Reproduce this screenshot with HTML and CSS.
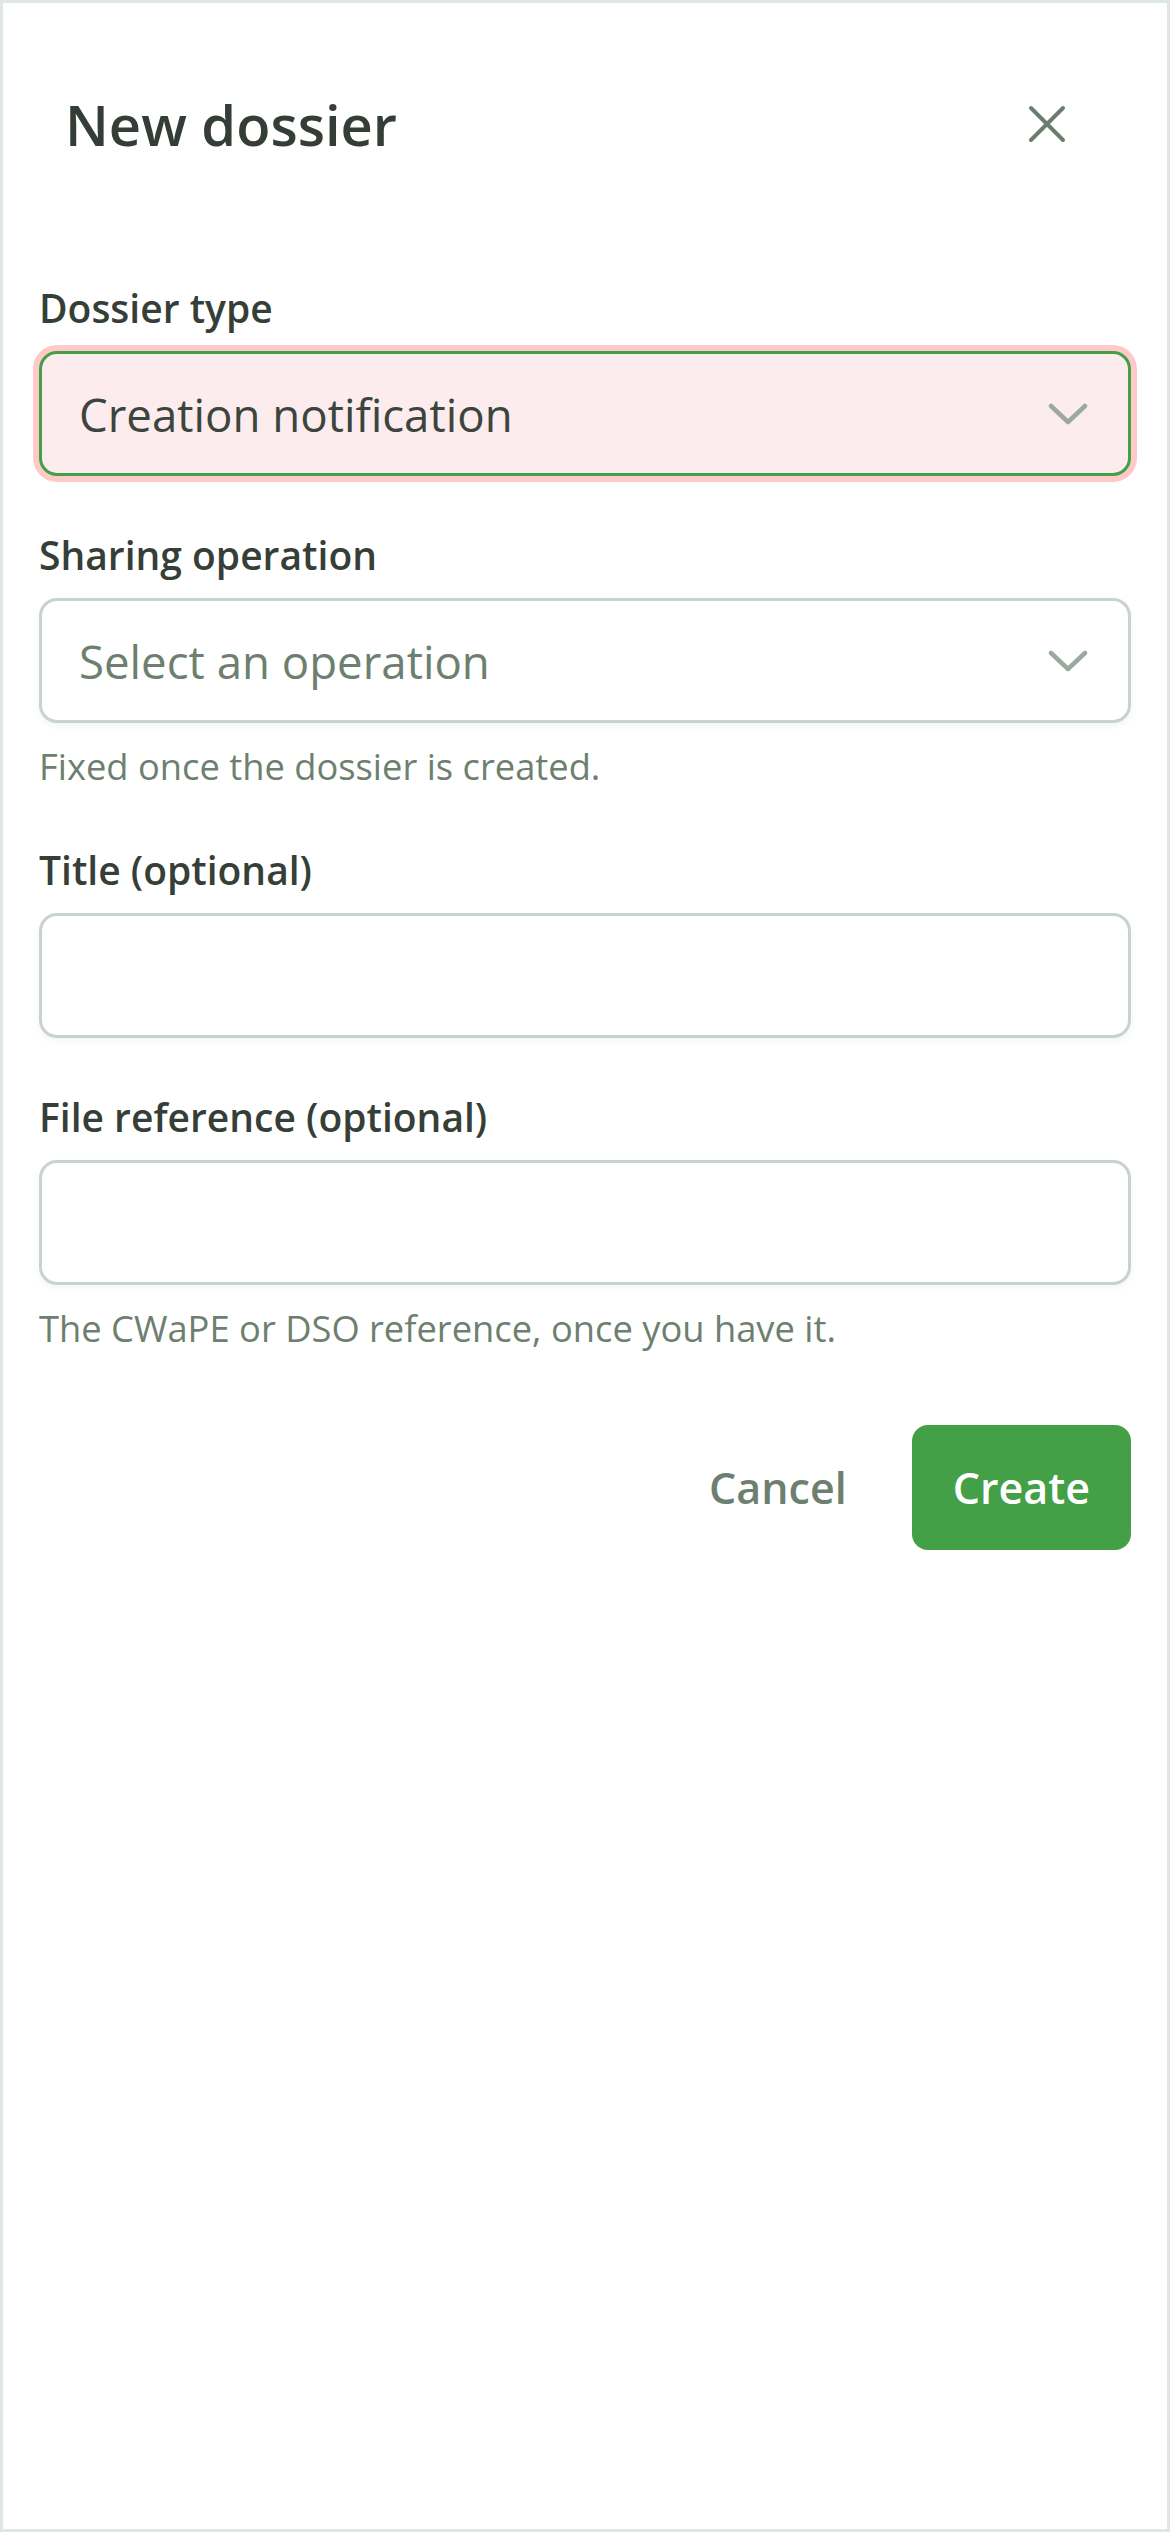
FILE: index.html
```html
<!DOCTYPE html>
<html>
<head>
<meta charset="utf-8">
<title>New dossier</title>
<link rel="stylesheet" href="styles.css">
</head>
<body>
<div class="sheet">
  <!-- header: title and close button -->
  <div class="sheet-head">
    <h1 class="sheet-title">New dossier</h1>
    <button class="close-btn" type="button" aria-label="Close">
      <svg width="38" height="38" viewBox="0 0 38 38"><path d="M3 3L35 35M35 3L3 35" stroke="currentColor" stroke-width="4" stroke-linecap="round" fill="none"/></svg>
    </button>
  </div>

  <form class="dossier-form">
    <div class="field">
      <label class="field-label">Dossier type</label>
      <div class="select select-focus">
        <span class="select-value">Creation notification</span>
        <svg class="chevron" width="40" height="22" viewBox="0 0 40 22"><path d="M3 3L20 19L37 3" stroke="currentColor" stroke-width="4.5" stroke-linecap="round" stroke-linejoin="round" fill="none"/></svg>
      </div>
    </div>

    <div class="field">
      <label class="field-label">Sharing operation</label>
      <div class="select">
        <span class="select-value placeholder">Select an operation</span>
        <svg class="chevron" width="40" height="22" viewBox="0 0 40 22"><path d="M3 3L20 19L37 3" stroke="currentColor" stroke-width="4.5" stroke-linecap="round" stroke-linejoin="round" fill="none"/></svg>
      </div>
      <div class="field-hint">Fixed once the dossier is created.</div>
    </div>

    <div class="field">
      <label class="field-label">Title (optional)</label>
      <input class="text-input" type="text">
    </div>

    <div class="field">
      <label class="field-label">File reference (optional)</label>
      <input class="text-input" type="text">
      <div class="field-hint">The CWaPE or DSO reference, once you have it.</div>
    </div>

    <div class="form-actions">
      <button class="btn-cancel" type="button">Cancel</button>
      <button class="btn-create" type="button">Create</button>
    </div>
  </form>
</div>
</body>
</html>
```

FILE: styles.css
```css
body {
    margin: 0;
    background: #dfe7e3;
    font-family: "Open Sans", "Noto Sans", sans-serif;
    color: #353f37;
}
.sheet {
    margin: 3px;
    min-height: 2526px;
    background: #fff;
    padding: 0 36px;
    box-sizing: border-box;
}
.sheet-head {
    display: flex;
    align-items: center;
    justify-content: space-between;
    padding: 89px 52px 0 26px;
}
.sheet-title {
    margin: 0;
    font-size: 56px;
    line-height: 64px;
    font-weight: 600;
    color: #343e36;
}
.close-btn {
    width: 64px;
    height: 64px;
    border: none;
    background: none;
    padding: 0;
    color: #6b7d6d;
    display: flex;
    align-items: center;
    justify-content: center;
    cursor: pointer;
}

.dossier-form {
    display: flex;
    flex-direction: column;
    gap: 55px;
    margin-top: 128px;
}
.field {
    display: flex;
    flex-direction: column;
}
.field-label {
    font-size: 39px;
    line-height: 48px;
    font-weight: 600;
    margin-bottom: 19px;
}
.field-hint {
    margin-top: 18px;
    font-size: 36.3px;
    line-height: 50px;
    color: #6d806f;
}

/* dropdowns and text boxes share the same box */
.select, .text-input {
    height: 125px;
    box-sizing: border-box;
    border: 3px solid #c8d3cb;
    border-radius: 18px;
    background: #fff;
    box-shadow: 0 3px 6px rgba(40, 60, 45, 0.05);
}
.select {
    display: flex;
    align-items: center;
    justify-content: space-between;
    padding: 0 40px 0 37px;
    cursor: pointer;
}
.select-focus {
    border-color: #43a047;
    background: #fdeced;
    box-shadow: 0 0 0 6px #ffc9c9;
}
.select-value {
    font-size: 45.6px;
    color: #3b443d;
}
.select-value.placeholder {
    color: #6d806f;
}
.chevron {
    color: #9aaa9e;
}
.text-input {
    width: 100%;
    padding: 0 37px;
    font-family: inherit;
    font-size: 46px;
    color: #3b443d;
    outline: none;
}

.form-actions {
    display: flex;
    justify-content: flex-end;
    align-items: center;
    gap: 41px;
    margin-top: 17px;
}
.btn-cancel, .btn-create {
    font-family: inherit;
    font-size: 43px;
    font-weight: 600;
    border: none;
    cursor: pointer;
}
.btn-cancel {
    background: none;
    color: #6d806f;
    padding: 0 24px;
}
.btn-create {
    height: 125px;
    padding: 0 41px;
    border-radius: 16px;
    background: #43a047;
    color: #fff;
}
```
